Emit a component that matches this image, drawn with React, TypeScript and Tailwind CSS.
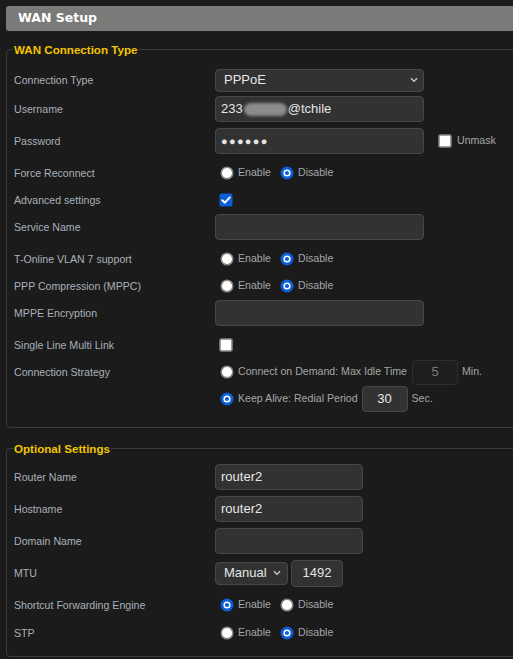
import React from "react";

const SANS = "font-['Liberation_Sans',Arial,sans-serif]";

function Radio({ checked }: { checked?: boolean }) {
  return checked ? (
    <svg width="14" height="14" viewBox="0 0 14 14" className="shrink-0">
      <circle cx="7" cy="7" r="6.5" fill="#0b5fd8" />
      <circle cx="7" cy="7" r="3.6" fill="#ffffff" />
      <circle cx="7" cy="7" r="2.1" fill="#0b5fd8" />
    </svg>
  ) : (
    <svg width="14" height="14" viewBox="0 0 14 14" className="shrink-0">
      <circle cx="7" cy="7" r="5.8" fill="#ffffff" stroke="#868686" strokeWidth="1.5" />
    </svg>
  );
}

function Checkbox({ checked }: { checked?: boolean }) {
  return checked ? (
    <svg width="14" height="14" viewBox="0 0 14 14" className="shrink-0">
      <rect x="0.5" y="0.5" width="13" height="13" rx="2" fill="#0b5fd8" />
      <path d="M3.3 7.2 L5.9 9.7 L10.8 4.4" fill="none" stroke="#fff" strokeWidth="1.9" strokeLinecap="round" strokeLinejoin="round" />
    </svg>
  ) : (
    <svg width="14" height="14" viewBox="0 0 14 14" className="shrink-0">
      <rect x="1" y="1" width="12" height="12" rx="1.5" fill="#ffffff" stroke="#868686" strokeWidth="1.6" />
    </svg>
  );
}

function Chevron() {
  return (
    <svg width="8" height="6" viewBox="0 0 8 6" className="shrink-0">
      <path d="M1 1.2 L4 4.4 L7 1.2" fill="none" stroke="#d0d0d0" strokeWidth="1.3" />
    </svg>
  );
}

function Row({ label, h, children }: { label?: string; h: string; children?: React.ReactNode }) {
  return (
    <div className={`flex items-center ${h}`}>
      <div className="w-[201px] shrink-0 pt-[2px] text-[10.6px] text-[#a9b1b9]">{label}</div>
      <div className="flex items-center">{children}</div>
    </div>
  );
}

function RadioPair({ first }: { first: boolean }) {
  return (
    <div className="flex items-center pl-[5px] text-[10.6px] text-[#a6a6a6]">
      <Radio checked={first} />
      <span className="ml-[4px]">Enable</span>
      <span className="ml-[9px]" />
      <Radio checked={!first} />
      <span className="ml-[4px]">Disable</span>
    </div>
  );
}

function TextBox({ w, children, className = "" }: { w: string; children?: React.ReactNode; className?: string }) {
  return (
    <div
      className={`flex h-[26px] ${w} items-center rounded-[4px] border border-[#474747] bg-[#323232] px-[5px] text-[13px] text-[#e6e6e6] ${className}`}
    >
      {children}
    </div>
  );
}

export default function App() {
  return (
    <div className={`${SANS} min-h-[659px] w-[513px] overflow-hidden bg-[#1b1b1b] pt-[6px]`}>
      {/* Header */}
      <div className="ml-[6px] flex h-[25px] w-[520px] items-center rounded-l-[3px] bg-[#7a7a78] pl-[12px]">
        <span className="font-['DejaVu_Sans',Verdana,sans-serif] text-[12.5px] font-bold text-white">
          WAN Setup
        </span>
      </div>

      {/* WAN Connection Type */}
      <fieldset className="ml-[6px] mt-[11px] w-[530px] rounded-[4px] border border-[#3b3b3b] pb-[12px] pl-[6px] pt-[10px]">
        <legend className="px-[1px] text-[11.6px] font-bold leading-[15px] text-[#f2c500]">
          WAN Connection Type
        </legend>
        <div className="flex flex-col pl-px">
          <Row label="Connection Type" h="h-[26px]">
            <div className="flex h-[23px] w-[209px] items-center justify-between rounded-[4px] border border-[#474747] bg-[#323232] pl-[8px] pr-[5px] text-[13px] text-[#e6e6e6]">
              <span>PPPoE</span>
              <Chevron />
            </div>
          </Row>
          <Row label="Username" h="h-[32px]">
            <TextBox w="w-[209px]">
              <span>233</span>
              <span className="mx-[1px] inline-block h-[13px] w-[43px] rounded-full bg-[#8c8c8c] blur-[1.5px]" />
              <span>@tchile</span>
            </TextBox>
          </Row>
          <Row label="Password" h="h-[32px]">
            <TextBox w="w-[209px]">
              <span className="text-[11px] tracking-[1.3px]">●●●●●●</span>
            </TextBox>
            <span className="ml-[14px]" />
            <Checkbox />
            <span className="ml-[5px] text-[10.6px] text-[#a6a6a6]">Unmask</span>
          </Row>
          <Row label="Force Reconnect" h="h-[32px]">
            <RadioPair first={false} />
          </Row>
          <Row label="Advanced settings" h="h-[22px]">
            <div className="pl-[4px]">
              <Checkbox checked />
            </div>
          </Row>
          <Row label="Service Name" h="h-[32px]">
            <TextBox w="w-[209px]" />
          </Row>
          <Row label="T-Online VLAN 7 support" h="h-[32px]">
            <RadioPair first={false} />
          </Row>
          <Row label="PPP Compression (MPPC)" h="h-[22px]">
            <RadioPair first={false} />
          </Row>
          <Row label="MPPE Encryption" h="h-[32px]">
            <TextBox w="w-[209px]" />
          </Row>
          <Row label="Single Line Multi Link" h="h-[32px]">
            <div className="pl-[4px]">
              <Checkbox />
            </div>
          </Row>
          <Row label="Connection Strategy" h="h-[22px]">
            <div className="flex items-center pl-[5px] text-[10.6px] text-[#a6a6a6]">
              <Radio />
              <span className="ml-[4px]">Connect on Demand: Max Idle Time</span>
              <div className="ml-[5px] flex h-[25px] w-[46px] items-center justify-center rounded-[4px] border border-[#2e2e2e] bg-[#1e1e1e] text-[13px] text-[#7a7a7a]">
                5
              </div>
              <span className="ml-[4px]">Min.</span>
            </div>
          </Row>
          <Row h="h-[32px]">
            <div className="flex items-center pl-[5px] text-[10.6px] text-[#a6a6a6]">
              <Radio checked />
              <span className="ml-[4px]">Keep Alive: Redial Period</span>
              <TextBox w="w-[46px]" className="ml-[4px] justify-center">
                30
              </TextBox>
              <span className="ml-[4px]">Sec.</span>
            </div>
          </Row>
        </div>
      </fieldset>

      {/* Optional Settings */}
      <fieldset className="ml-[6px] mt-[13px] w-[530px] rounded-[4px] border border-[#3b3b3b] pb-[11px] pl-[6px] pt-[5px]">
        <legend className="px-[1px] text-[11.6px] font-bold leading-[15px] text-[#f2c500]">
          Optional Settings
        </legend>
        <div className="flex flex-col pl-px">
          <Row label="Router Name" h="h-[32px]">
            <TextBox w="w-[148px]">router2</TextBox>
          </Row>
          <Row label="Hostname" h="h-[32px]">
            <TextBox w="w-[148px]">router2</TextBox>
          </Row>
          <Row label="Domain Name" h="h-[32px]">
            <TextBox w="w-[148px]" />
          </Row>
          <Row label="MTU" h="h-[32px]">
            <div className="flex h-[23px] w-[73px] items-center justify-between rounded-[4px] border border-[#474747] bg-[#323232] pl-[8px] pr-[6px] text-[13px] text-[#e6e6e6]">
              <span>Manual</span>
              <Chevron />
            </div>
            <TextBox w="w-[52px]" className="ml-[3px] h-[27px] justify-center">
              1492
            </TextBox>
          </Row>
          <Row label="Shortcut Forwarding Engine" h="h-[32px]">
            <RadioPair first={true} />
          </Row>
          <Row label="STP" h="h-[24px]">
            <RadioPair first={false} />
          </Row>
        </div>
      </fieldset>
    </div>
  );
}
